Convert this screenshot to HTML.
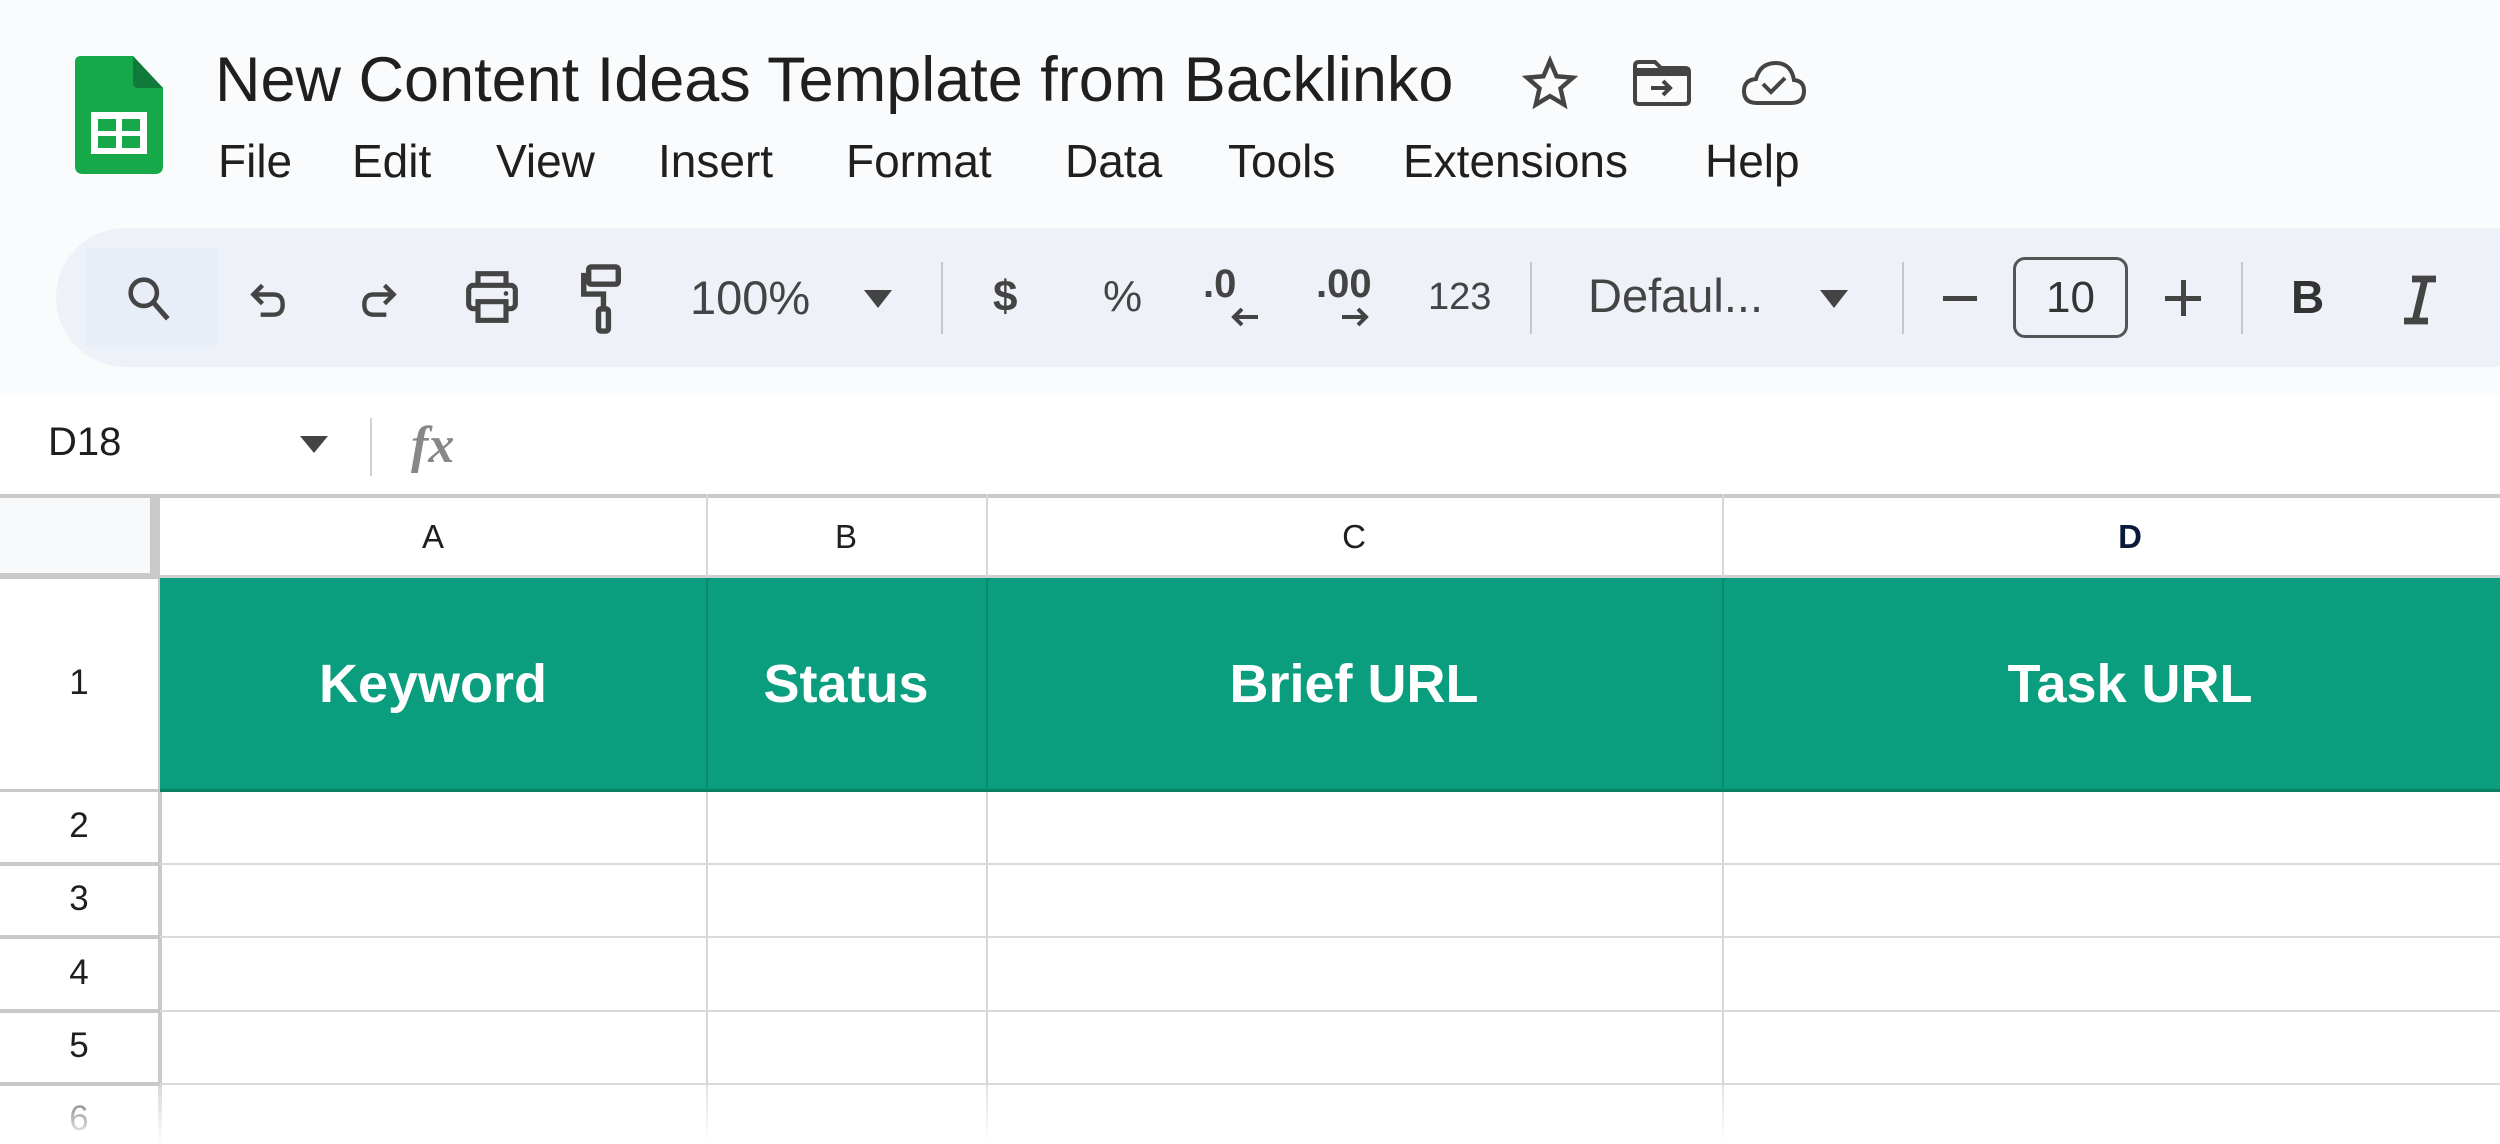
<!DOCTYPE html>
<html><head><meta charset="utf-8"><style>
*{margin:0;padding:0;box-sizing:border-box}
body{width:2500px;height:1144px;overflow:hidden;background:#f9fbfd;font-family:"Liberation Sans",Arial,sans-serif;position:relative;color:#1f1f1f}
.a{position:absolute}
.t{white-space:nowrap}
.menu span{position:absolute;top:0;font-size:46px}
.tb{left:56px;top:228px;width:2500px;height:139px;background:#eef2f8;border-radius:70px 0 0 70px}
.ic{position:absolute;top:268px}
.sep{position:absolute;top:262px;width:2px;height:72px;background:#c7c7c7}
.tt{position:absolute;font-size:44px;color:#444;top:272px}
.grid{left:0;top:395px;width:2500px;height:749px;background:#fff}
.vl{position:absolute;width:2px;background:#d6d6d6}
.hl{position:absolute;height:2px;background:#dadada;left:0;width:2500px}
.ch{position:absolute;top:518px;font-size:33px;text-align:center}
.rn{position:absolute;left:0;width:158px;text-align:center;font-size:35px}
.hd{position:absolute;top:577px;height:214px;line-height:214px;text-align:center;color:#fff;font-weight:bold;font-size:54px}
</style></head><body>
<svg class="a" style="left:75px;top:56px" width="88" height="118" viewBox="0 0 88 118">
<path d="M6 0H58L88 32V110Q88 118 80 118H8Q0 118 0 110V6Q0 0 6 0Z" fill="#16a849"/>
<path d="M58 0L88 32H64Q58 32 58 26Z" fill="#0f7a3a"/>
<rect x="16" y="56" width="56" height="42" fill="#fff"/>
<rect x="23" y="63" width="18" height="12" fill="#16a849"/><rect x="47" y="63" width="18" height="12" fill="#16a849"/>
<rect x="23" y="80" width="18" height="12" fill="#16a849"/><rect x="47" y="80" width="18" height="12" fill="#16a849"/>
</svg>
<div class="a t" style="left:215px;top:44px;font-size:63px;color:#1f1f1f">New Content Ideas Template from Backlinko</div>
<svg class="a" style="left:1522px;top:55px" width="56" height="56" viewBox="0 0 24 24"><path d="M12 2.5l2.8 6.6 7 .6-5.3 4.6 1.6 7L12 17.6 5.9 21.3l1.6-7L2.2 9.7l7-.6z" fill="none" stroke="#444" stroke-width="1.9" stroke-linejoin="miter"/></svg>
<svg class="a" style="left:1633px;top:60px" width="58" height="46" viewBox="0 0 58 46"><path d="M2 6Q2 2 6 2H22L28 8H52Q56 8 56 12V40Q56 44 52 44H6Q2 44 2 40Z" fill="none" stroke="#444" stroke-width="4"/><rect x="2" y="8" width="54" height="8" fill="#444"/><path d="M18 28H36M30 21L37 28L30 35" stroke="#444" stroke-width="4" fill="none"/></svg>
<svg class="a" style="left:1741px;top:60px" width="66" height="46" viewBox="0 0 66 46"><path d="M16 43Q3 43 3 31Q3 20 15 19Q19 3 35 3Q50 3 53 20Q63 21 63 31Q63 43 50 43Z" fill="none" stroke="#444" stroke-width="4"/><path d="M22 24L30 32L44 18" fill="none" stroke="#444" stroke-width="4"/></svg>
<div class="a menu" style="left:0;top:134px;width:2500px;height:60px">
<span style="left:218px">File</span><span style="left:352px">Edit</span><span style="left:496px">View</span><span style="left:658px">Insert</span><span style="left:846px">Format</span><span style="left:1065px">Data</span><span style="left:1228px">Tools</span><span style="left:1403px">Extensions</span><span style="left:1705px">Help</span>
</div>
<div class="a tb"></div>
<div class="a" style="left:86px;top:248px;width:132px;height:100px;background:#e8eef8;border-radius:6px"></div>
<svg class="ic" style="left:124px;top:272px" width="50" height="52" viewBox="0 0 24 24"><circle cx="9.5" cy="9.5" r="6.3" fill="none" stroke="#444" stroke-width="2.2"/><path d="M14 14L21 22" stroke="#444" stroke-width="2.4"/></svg>
<svg class="ic" style="left:246px;top:276px" width="44" height="48" viewBox="0 0 24 24"><path d="M5 9H15Q20 9 20 14.5Q20 20 15 20H8" fill="none" stroke="#444" stroke-width="2.4"/><path d="M9 4L4 9L9 14" fill="none" stroke="#444" stroke-width="2.4"/></svg>
<svg class="ic" style="left:357px;top:276px" width="44" height="48" viewBox="0 0 24 24"><path d="M19 9H9Q4 9 4 14.5Q4 20 9 20H16" fill="none" stroke="#444" stroke-width="2.4"/><path d="M15 4L20 9L15 14" fill="none" stroke="#444" stroke-width="2.4"/></svg>
<svg class="ic" style="left:464px;top:266px" width="56" height="62" viewBox="0 0 24 26"><path d="M6 8V3H18V8" fill="none" stroke="#444" stroke-width="2.2"/><rect x="2" y="8" width="20" height="10" rx="2" fill="none" stroke="#444" stroke-width="2.2"/><rect x="6" y="15" width="12" height="8" fill="#eef2f8" stroke="#444" stroke-width="2.2"/><circle cx="18" cy="11.5" r="1" fill="#444"/></svg>
<svg class="ic" style="left:578px;top:262px" width="46" height="74" viewBox="0 0 18 30"><rect x="4" y="2" width="12" height="7" rx="1" fill="none" stroke="#444" stroke-width="2.2"/><path d="M4 5.5H2V13H10V19" fill="none" stroke="#444" stroke-width="2.2"/><rect x="8" y="19" width="4" height="9" rx="1" fill="none" stroke="#444" stroke-width="2.2"/></svg>
<div class="tt" style="left:690px;top:270px;font-size:47px">100%</div>
<svg class="ic" style="left:864px;top:290px" width="28" height="18" viewBox="0 0 28 18"><path d="M0 0H28L14 18Z" fill="#444"/></svg>
<div class="sep" style="left:941px"></div>
<div class="tt" style="left:993px;font-weight:bold">$</div>
<div class="tt" style="left:1103px">%</div>
<div class="tt" style="left:1203px;top:262px;font-size:40px;font-weight:bold">.0</div>
<svg class="ic" style="left:1230px;top:306px" width="30" height="22" viewBox="0 0 30 22"><path d="M28 11H4M12 3L4 11L12 19" fill="none" stroke="#444" stroke-width="4"/></svg>
<div class="tt" style="left:1316px;top:262px;font-size:40px;font-weight:bold">.00</div>
<svg class="ic" style="left:1340px;top:306px" width="30" height="22" viewBox="0 0 30 22"><path d="M2 11H26M18 3L26 11L18 19" fill="none" stroke="#444" stroke-width="4"/></svg>
<div class="tt" style="left:1428px;top:276px;font-size:38px">123</div>
<div class="sep" style="left:1530px"></div>
<div class="tt" style="left:1588px;top:268px;font-size:47px">Defaul...</div>
<svg class="ic" style="left:1820px;top:290px" width="28" height="18" viewBox="0 0 28 18"><path d="M0 0H28L14 18Z" fill="#444"/></svg>
<div class="sep" style="left:1902px"></div>
<div class="a" style="left:1943px;top:296px;width:34px;height:5px;background:#444"></div>
<div class="a" style="left:2013px;top:257px;width:115px;height:81px;border:3px solid #555;border-radius:12px;text-align:center;line-height:75px;font-size:44px;color:#333">10</div>
<div class="a" style="left:2165px;top:296px;width:36px;height:5px;background:#444"></div>
<div class="a" style="left:2181px;top:280px;width:5px;height:36px;background:#444"></div>
<div class="sep" style="left:2241px"></div>
<div class="tt" style="left:2291px;top:270px;font-weight:bold;font-size:46px;color:#333">B</div>
<svg class="ic" style="left:2400px;top:275px" width="40" height="50" viewBox="0 0 20 25"><path d="M6 2H18M2 23H14M12.5 2L7.5 23" stroke="#444" stroke-width="3.4" fill="none"/></svg>
<div class="a grid"></div>
<div class="tt a" style="left:48px;top:420px;font-size:40px;color:#1f1f1f">D18</div>
<svg class="a" style="left:300px;top:436px" width="28" height="17" viewBox="0 0 28 17"><path d="M0 0H28L14 17Z" fill="#444"/></svg>
<div class="a" style="left:370px;top:418px;width:2px;height:58px;background:#d0d0d0"></div>
<div class="a t" style="left:411px;top:416px;font-family:'Liberation Serif',serif;font-style:italic;font-size:52px;color:#888;font-weight:bold">fx</div>
<div class="a" style="left:0;top:494px;width:2500px;height:4px;background:#c9c9c9"></div>
<div class="a" style="left:0;top:498px;width:150px;height:75px;background:#f8f9fa"></div>
<div class="a" style="left:150px;top:494px;width:10px;height:83px;background:#c9c9c9"></div>
<div class="a" style="left:0;top:573px;width:160px;height:6px;background:#c9c9c9"></div>
<div class="a" style="left:160px;top:575px;width:2340px;height:3px;background:#d0d0d0"></div>
<div class="vl" style="left:706px;top:494px;height:650px"></div>
<div class="vl" style="left:986px;top:494px;height:650px"></div>
<div class="vl" style="left:1722px;top:494px;height:650px"></div>
<div class="a" style="left:158px;top:577px;width:4px;height:567px;background:#c9c9c9"></div>
<div class="ch" style="left:160px;width:546px">A</div>
<div class="ch" style="left:706px;width:280px">B</div>
<div class="ch" style="left:986px;width:736px">C</div>
<div class="ch" style="left:1722px;width:816px;font-weight:bold;color:#0b1a3a">D</div>
<div class="a" style="left:160px;top:578px;width:2340px;height:213px;background:#0b9e7e"></div>
<div class="a" style="left:160px;top:789px;width:2340px;height:3px;background:#0a7f62"></div>
<div class="a" style="left:706px;top:578px;width:2px;height:213px;background:#098a6c"></div>
<div class="a" style="left:986px;top:578px;width:2px;height:213px;background:#098a6c"></div>
<div class="a" style="left:1722px;top:578px;width:2px;height:213px;background:#098a6c"></div>
<div class="hd" style="left:160px;width:546px">Keyword</div>
<div class="hd" style="left:706px;width:280px">Status</div>
<div class="hd" style="left:986px;width:736px">Brief URL</div>
<div class="hd" style="left:1722px;width:816px">Task URL</div>
<div class="rn" style="top:663px">1</div>
<div class="a" style="left:0;top:789px;width:160px;height:3px;background:#c9c9c9"></div>
<div class="hl" style="top:863px"></div><div class="hl" style="top:936px"></div><div class="hl" style="top:1010px"></div><div class="hl" style="top:1083px"></div>
<div class="a" style="left:0;top:862px;width:160px;height:4px;background:#c9c9c9"></div>
<div class="a" style="left:0;top:935px;width:160px;height:4px;background:#c9c9c9"></div>
<div class="a" style="left:0;top:1009px;width:160px;height:4px;background:#c9c9c9"></div>
<div class="a" style="left:0;top:1082px;width:160px;height:4px;background:#c9c9c9"></div>
<div class="rn" style="top:806px">2</div>
<div class="rn" style="top:879px">3</div>
<div class="rn" style="top:953px">4</div>
<div class="rn" style="top:1026px">5</div>
<div class="rn" style="top:1099px">6</div>
<div class="a" style="left:0;top:1086px;width:2500px;height:58px;background:linear-gradient(rgba(255,255,255,0.3),#fff)"></div>
</body></html>
